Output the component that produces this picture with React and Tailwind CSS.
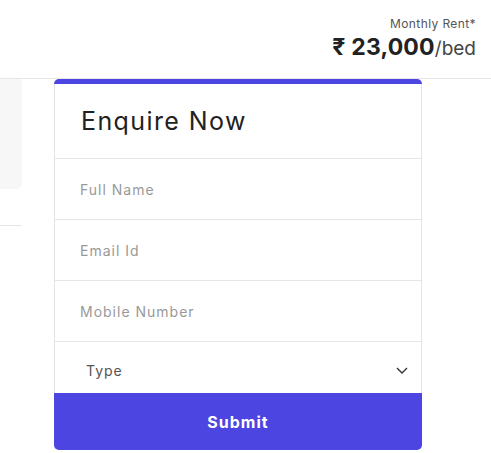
import React from "react";

export default function App() {
  const font = { fontFamily: "Inter, 'Noto Sans', sans-serif" };
  return (
    <div className="w-[491px] h-[453px] bg-white overflow-hidden" style={font}>
      <header className="h-[79px] border-b border-[#e6e6e6] flex flex-col items-end pr-[15px] pt-[17px]">
        <div className="text-[12px] leading-[14px] text-[#555] tracking-[0.4px]">Monthly Rent*</div>
        <div className="mt-[3px] leading-[26px] text-[#222] flex items-baseline">
          <span className="text-[23px] font-bold tracking-[0.2px]">₹ 23,000</span>
          <span className="text-[19px] text-[#444]">/bed</span>
        </div>
      </header>
      <div className="flex">
        <div className="w-[22px] shrink-0">
          <div className="h-[110px] bg-[#f7f7f7] rounded-br-[6px]"></div>
          <div className="mt-[36px] h-px bg-[#e6e6e6]"></div>
        </div>
        <div className="ml-[32px] w-[368px] shrink-0">
          <div className="h-[5px] bg-[#4d45e1] rounded-t-[5px]"></div>
          <div className="border-x border-[#e3e3e3]">
            <div className="h-[75px] border-b border-[#e6e6e6] flex items-center pl-[26px] pt-[1px]">
              <h2 className="text-[25px] text-[#222] tracking-[1.4px]">Enquire Now</h2>
            </div>
            {["Full Name", "Email Id", "Mobile Number"].map((t) => (
              <div key={t} className="h-[61px] border-b border-[#e6e6e6] flex items-center pl-[25px]">
                <span className="text-[14px] text-[#999] tracking-[1px]">{t}</span>
              </div>
            ))}
            <div className="h-[51px] flex items-center justify-between pl-[31px] pr-[13px] pt-[6px]">
              <span className="text-[14px] text-[#555] tracking-[1px]">Type</span>
              <svg width="12" height="7" viewBox="0 0 12 7" fill="none" stroke="#333" strokeWidth="1.4">
                <path d="M1 1l5 5 5-5" />
              </svg>
            </div>
          </div>
          <button className="w-full h-[57px] bg-[#4d45e1] rounded-b-[5px] text-white text-[16px] font-bold tracking-[1px]">
            Submit
          </button>
        </div>
      </div>
    </div>
  );
}
